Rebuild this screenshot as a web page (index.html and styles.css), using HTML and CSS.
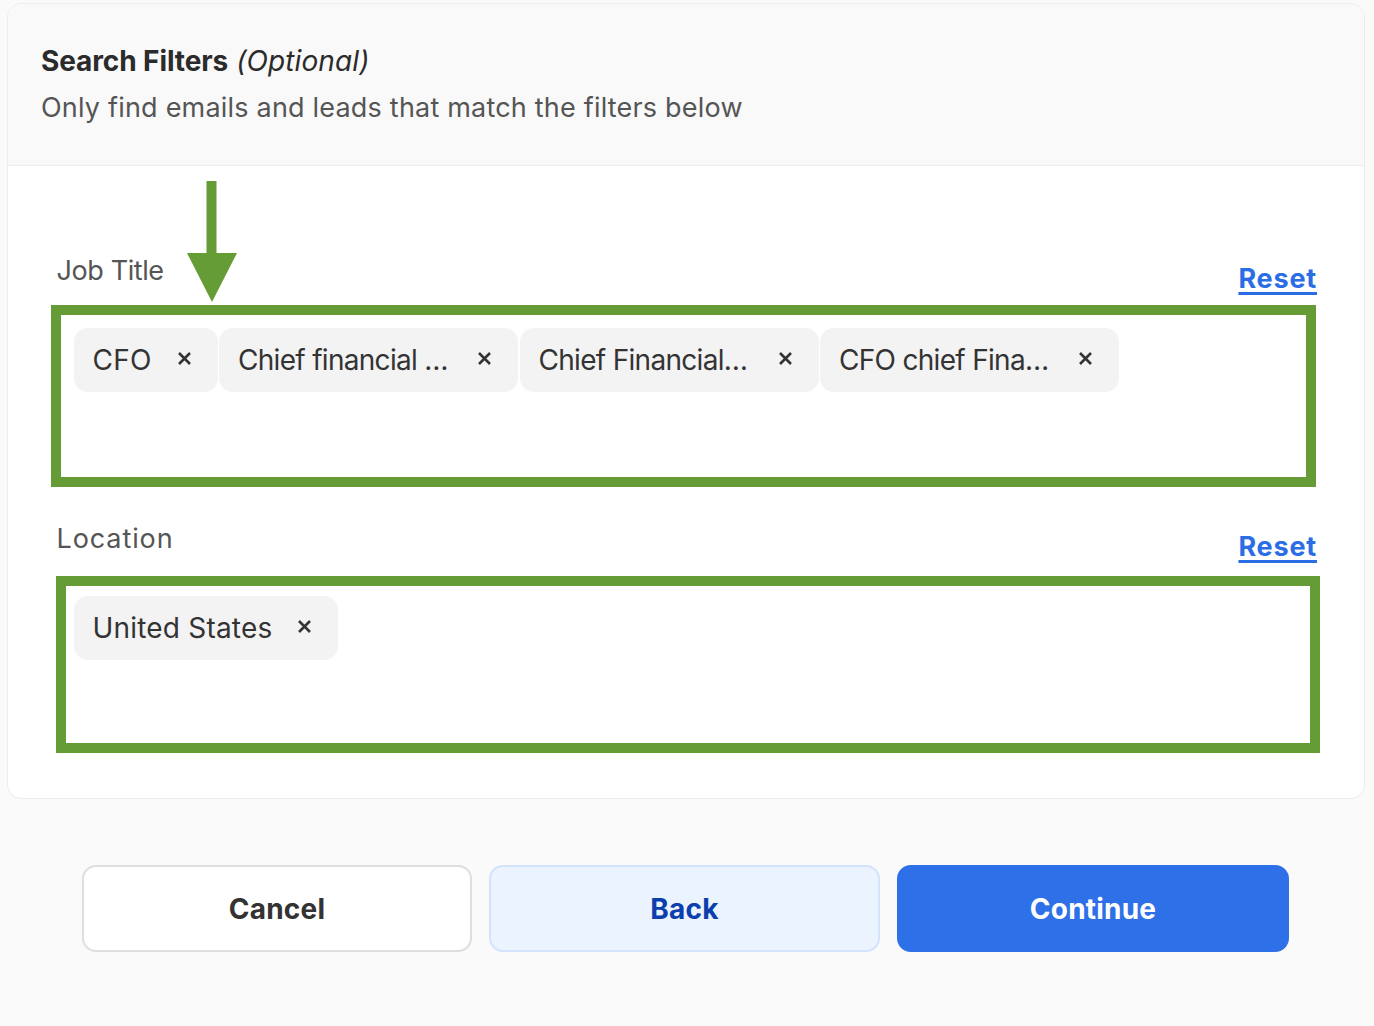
FILE: index.html
```html
<!DOCTYPE html>
<html lang="en">
<head>
<meta charset="utf-8">
<title>Search Filters</title>
<link rel="stylesheet" href="styles.css">
</head>
<body>
<div class="card">
  <div class="card-head">
    <div class="title"><strong>Search Filters</strong> <em>(Optional)</em></div>
    <div class="subtitle">Only find emails and leads that match the filters below</div>
  </div>
  <div class="card-body">
    <svg class="arrow" width="50" height="121" viewBox="0 0 50 121" aria-hidden="true">
      <rect x="19.5" y="0" width="10" height="74" fill="#669c35"/>
      <polygon points="0,72 50,72 25,121" fill="#669c35"/>
    </svg>
    <div class="field field-job">
      <div class="field-row">
        <span class="label label-job">Job Title</span>
        <a class="reset" href="#">Reset</a>
      </div>
      <div class="box box-job">
        <span class="chip"><span class="chip-text">CFO</span><svg class="x" viewBox="0 0 15 15"><path d="M2 2L13 13M13 2L2 13"/></svg></span>
        <span class="chip"><span class="chip-text trunc">Chief financial …</span><svg class="x" viewBox="0 0 15 15"><path d="M2 2L13 13M13 2L2 13"/></svg></span>
        <span class="chip"><span class="chip-text trunc">Chief Financial…</span><svg class="x" viewBox="0 0 15 15"><path d="M2 2L13 13M13 2L2 13"/></svg></span>
        <span class="chip"><span class="chip-text trunc">CFO chief Fina…</span><svg class="x" viewBox="0 0 15 15"><path d="M2 2L13 13M13 2L2 13"/></svg></span>
      </div>
    </div>
    <div class="field field-loc">
      <div class="field-row">
        <span class="label label-loc">Location</span>
        <a class="reset" href="#">Reset</a>
      </div>
      <div class="box box-loc">
        <span class="chip"><span class="chip-text">United States</span><svg class="x" viewBox="0 0 15 15"><path d="M2 2L13 13M13 2L2 13"/></svg></span>
      </div>
    </div>
  </div>
</div>
<div class="actions">
  <button class="btn btn-cancel">Cancel</button>
  <button class="btn btn-back">Back</button>
  <button class="btn btn-continue">Continue</button>
</div>
</body>
</html>
```
FILE: styles.css
```css
* { box-sizing: border-box; }
html, body { margin: 0; padding: 0; }
body {
  background: #fafafa;
  font-family: Inter, "Liberation Sans", sans-serif;
  color: #333;
  width: 1374px;
  height: 1026px;
  overflow: hidden;
}
.card {
  margin: 3px 0 0 7px;
  width: 1358px;
  border: 1.5px solid #ececec;
  border-radius: 14px;
  background: #fff;
  overflow: hidden;
}
.card-head {
  background: #f9f9f9;
  border-bottom: 1.5px solid #ececec;
  height: 162px;
  padding: 39px 0 0 33px;
}
.title {
  font-size: 28px;
  line-height: 36px;
  color: #2b2b2b;
  letter-spacing: 0.1px;
}
.title strong { font-weight: 700; letter-spacing: -0.1px; }
.title em { font-weight: 400; font-style: italic; }
.subtitle {
  margin-top: 12px;
  font-size: 27px;
  line-height: 34px;
  color: #555;
  letter-spacing: 0.2px;
}
.card-body {
  position: relative;
  padding: 88px 48px 45px 48.5px;
}
.arrow {
  position: absolute;
  left: 178.5px;
  top: 15px;
}
.field-row {
  display: flex;
  justify-content: space-between;
  align-items: flex-start;
  height: 34px;
}
.label {
  font-size: 27px;
  line-height: 34px;
  color: #555;
}
.label-job { letter-spacing: -0.4px; }
.label-loc { letter-spacing: 0.9px; }
.reset {
  margin-top: 8px;
  margin-right: -1px;
  font-size: 27px;
  line-height: 34px;
  font-weight: 700;
  color: #2b6de5;
  text-decoration: underline;
  text-decoration-thickness: 2.5px;
  text-underline-offset: 4px;
  letter-spacing: 0.8px;
}
.box {
  border: 10px solid #669c35;
  background: #fff;
  display: flex;
  flex-wrap: wrap;
  align-content: flex-start;
  gap: 1.5px;
}
.box-job {
  margin: 17px 0 0 -6px;
  height: 182px;
  padding: 13px 0 0 13px;
}
.field-loc { margin-top: 35px; }
.box-loc {
  margin: 20px -4px 0 -1px;
  height: 177px;
  padding: 10px 0 0 8px;
}
.chip {
  display: inline-flex;
  align-items: center;
  height: 64px;
  padding: 0 26px 0 19px;
  background: #f3f3f3;
  border-radius: 14px;
}
.chip-text {
  font-size: 28px;
  line-height: 34px;
  color: #333;
  letter-spacing: 0.2px;
  white-space: nowrap;
}
.chip-text.trunc { width: 214px; letter-spacing: -0.7px; }
.x {
  width: 15px;
  height: 15px;
  margin-left: 25px;
  margin-top: -3px;
  fill: none;
  stroke: #333;
  stroke-width: 2.6;
  stroke-linecap: butt;
}
.actions {
  display: flex;
  justify-content: center;
  gap: 17px;
  margin-top: 66px;
  padding-right: 3px;
}
.btn {
  height: 87px;
  border-radius: 14px;
  font-family: inherit;
  font-size: 28px;
  font-weight: 700;
  letter-spacing: 0.2px;
  cursor: pointer;
}
.btn-cancel {
  width: 390px;
  background: #fff;
  border: 2px solid #dedede;
  color: #333;
}
.btn-back {
  width: 391px;
  background: #eaf3fe;
  border: 2px solid #d3e3fc;
  color: #0b3fae;
}
.btn-continue {
  width: 392px;
  background: #2e70e8;
  border: 2px solid #2e70e8;
  color: #fff;
}
```
